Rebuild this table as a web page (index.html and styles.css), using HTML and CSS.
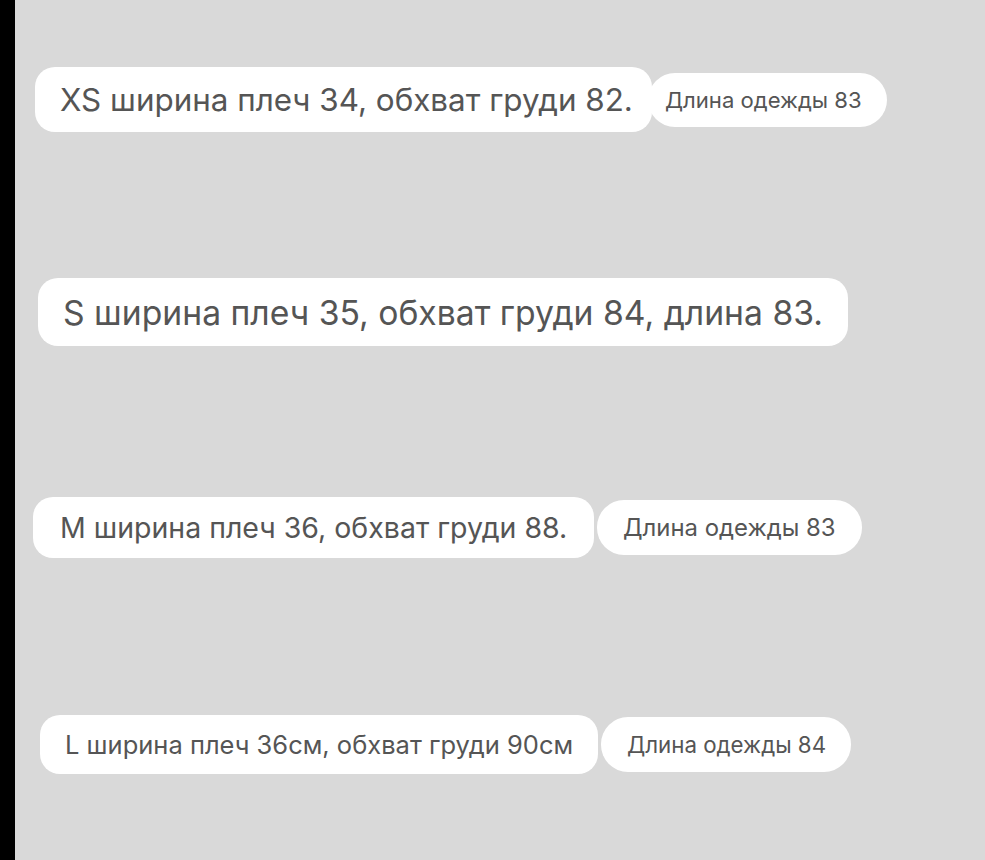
FILE: index.html
```html
<!DOCTYPE html>
<html lang="ru">
<head>
<meta charset="utf-8">
<title>Размеры</title>
<link rel="stylesheet" href="styles.css">
</head>
<body>
<div class="page">
  <div class="strip"></div>
  <main class="rows">
    <div class="row row-1">
      <span class="pill pill-main pm-1">XS ширина плеч 34, обхват груди 82.</span>
      <span class="pill pill-side ps-1">Длина одежды 83</span>
    </div>
    <div class="row row-2">
      <span class="pill pill-main pm-2">S ширина плеч 35, обхват груди 84, длина 83.</span>
    </div>
    <div class="row row-3">
      <span class="pill pill-main pm-3">М ширина плеч 36, обхват груди 88.</span>
      <span class="pill pill-side ps-3">Длина одежды 83</span>
    </div>
    <div class="row row-4">
      <span class="pill pill-main pm-4">L ширина плеч 36см, обхват груди 90см</span>
      <span class="pill pill-side ps-4">Длина одежды 84</span>
    </div>
  </main>
</div>
</body>
</html>
```
FILE: styles.css
```css
html, body {
  margin: 0;
  padding: 0;
}
body {
  background: #d9d9d9;
  font-family: "Inter", "Noto Sans", sans-serif;
  color: #555555;
}
.page {
  display: flex;
  height: 860px;
  overflow: hidden;
}
.strip {
  width: 15px;
  flex: none;
  background: #000;
}
.rows {
  flex: 1;
  display: flex;
  flex-direction: column;
}
.row {
  display: flex;
  align-items: center;
}
.pill {
  background: #fff;
  display: flex;
  align-items: center;
  white-space: nowrap;
  box-sizing: border-box;
}
.pill-main {
  border-radius: 20px;
}
.pill-side {
  border-radius: 27px;
}

.row-1 { margin-top: 67px; padding-left: 20px; }
.pm-1 { height: 65px; width: 617px; padding-left: 25px; font-size: 31.4px; }
.ps-1 { height: 54px; width: 239px; margin-left: -4px; padding-left: 17px; font-size: 22.1px; }

.row-2 { margin-top: 146px; padding-left: 23px; }
.pm-2 { height: 68px; width: 810px; padding-left: 25px; font-size: 33.7px; }

.row-3 { margin-top: 151px; padding-left: 18px; }
.pm-3 { height: 61px; width: 561px; padding-left: 27px; font-size: 28.5px; }
.ps-3 { height: 55px; width: 265px; margin-left: 3px; padding-left: 26px; font-size: 23.9px; }

.row-4 { margin-top: 157px; padding-left: 25px; }
.pm-4 { height: 59px; width: 558px; padding-left: 25px; font-size: 25.5px; }
.ps-4 { height: 55px; width: 250px; margin-left: 3px; padding-left: 26px; font-size: 22.3px; }
```
